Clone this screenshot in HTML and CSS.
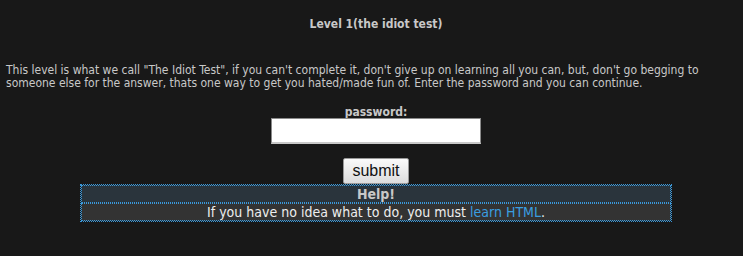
FILE: index.html
```html
<!doctype html>
<html lang="en">
    <head>
        <meta charset="UTF-8" />
        <title>Level 1(the idiot test)</title>
        <link rel="stylesheet" href="styles.css">
    </head>
    <body>
        <div class="level">
            <h3 class="level-title">Level 1(the idiot test)</h3>

            <p class="level-text">
                This level is what we call "The Idiot Test", if you can't complete it, don't give up on learning all you can, but, don't go begging to someone else for the answer, thats one way to get you hated/made fun of. Enter the password and you can continue.
            </p>

            <form class="pass-form" onsubmit="return false;">
                <label for="pass" class="pass-label">password:</label>
                <input type="password" id="pass" class="pass-input" />
                <button type="submit" class="submit-btn">submit</button>
            </form>

            <table class="help" cellspacing="0">
                <tr>
                    <td class="help-head">Help!</td>
                </tr>
                <tr>
                    <td class="help-body">
                        If you have no idea what to do, you must <a href="#">learn HTML</a>.
                    </td>
                </tr>
            </table>
        </div>
    </body>
</html>
```

FILE: styles.css
```css
body {
    margin: 0;
    padding: 0 0 0 6px;
    background: #181818;
    color: #c8c8c8;
    font-family: "DejaVu Sans Condensed", "DejaVu Sans", sans-serif;
    font-size: 12px;
}

/* блоки по центру чуть смещены вправо, как в оригинале */
.level-title,
.pass-form {
    padding-left: 3px;
}

.level-title {
    text-align: center;
    font-size: 12px;
    font-weight: bold;
    line-height: 14px;
    margin: 0;
    padding-top: 17px;
}

.level-text {
    margin: 33px 0 0 0;
    line-height: 13px;
}

.pass-form {
    display: flex;
    flex-direction: column;
    align-items: center;
    margin-top: 16px;
}

.pass-label {
    font-weight: bold;
    line-height: 12px;
}

.pass-input {
    box-sizing: border-box;
    width: 210px;
    height: 26px;
    margin: 0;
    padding: 1px 3px;
    border: 1px solid #8a8a8a;
    border-bottom: 2px solid #c8c8c8;
    background: white;
}

.submit-btn {
    box-sizing: border-box;
    height: 26px;
    margin-top: 14px;
    font-family: "Liberation Sans", Arial, sans-serif;
    font-size: 16px;
    color: #111;
    padding: 0 8px;
    background: linear-gradient(#fafafa, #dcdcdc);
    border: 1px solid #999;
    border-radius: 2px;
}

.help {
    width: 592px;
    margin: 0 0 0 74px;
    border: 1px dotted #3a97d8;
}

.help td {
    border: 1px dotted #3a97d8;
    text-align: center;
    padding: 0;
    height: 16px;
    line-height: 16px;
}

.help-head {
    background: #2a343c;
    font-weight: bold;
    font-size: 14px;
}

.help-body {
    background: #333;
    color: #eee;
    font-size: 14px;
}

.help-body a {
    color: #3a9ee0;
    text-decoration: none;
}
```
